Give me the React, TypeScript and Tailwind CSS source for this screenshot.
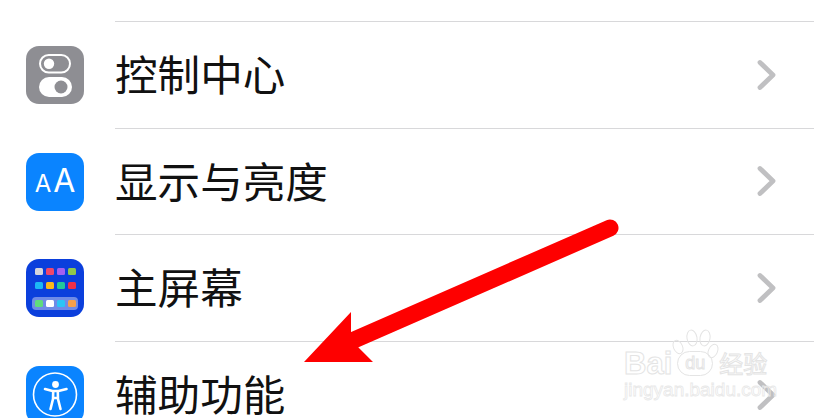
import type { ReactNode } from 'react';

function ControlIcon() {
  return (
    <svg viewBox="0 0 58 58" className="w-[58px] h-[58px]">
      <rect width="58" height="58" rx="13" fill="#8e8e93" />
      <rect x="14" y="9" width="30" height="17.5" rx="8.75" fill="none" stroke="#fff" strokeWidth="2" />
      <circle cx="23" cy="17.75" r="5.2" fill="#fff" />
      <rect x="13" y="31" width="33" height="20" rx="10" fill="#fff" />
      <circle cx="35" cy="41" r="6.5" fill="#8e8e93" />
    </svg>
  );
}

function DisplayIcon() {
  return (
    <div className="w-[58px] h-[58px] rounded-[13px] bg-[#0a84ff] flex items-baseline justify-center gap-[2px] pt-[12px] text-white font-normal font-['Inter',sans-serif]">
      <span className="text-[24px] leading-none">A</span>
      <span className="text-[32px] leading-none">A</span>
    </div>
  );
}

const homeDots = ['#d5d5dc', '#f0476b', '#a55ff0', '#8fc84a', '#1cb8f5', '#fbb81c', '#22c79a', '#f0304a'];
const dockDots = ['#5fdc7c', '#ffffff', '#2cc4f5', '#f5a04a'];

function HomeIcon() {
  return (
    <div className="w-[58px] h-[58px] rounded-[13px] bg-[#0b3fdc] flex flex-col items-center pt-[9px]">
      <div className="grid grid-cols-4 gap-x-[3px] gap-y-[7px]">
        {homeDots.map((c) => (
          <div key={c} className="w-[8px] h-[7px] rounded-[1.5px]" style={{ backgroundColor: c }} />
        ))}
      </div>
      <div className="mt-[8px] w-[46px] h-[13px] rounded-[4px] bg-[#6f8be6] flex items-center justify-center gap-[3px]">
        {dockDots.map((c) => (
          <div key={c} className="w-[8px] h-[7px] rounded-[1.5px]" style={{ backgroundColor: c }} />
        ))}
      </div>
    </div>
  );
}

function AccessIcon() {
  return (
    <svg viewBox="0 0 58 58" className="w-[58px] h-[58px]">
      <rect width="58" height="58" rx="13" fill="#0a84ff" />
      <circle cx="29" cy="28.5" r="21.5" fill="none" stroke="#fff" strokeWidth="1.6" />
      <circle cx="29.5" cy="18.5" r="3.4" fill="#fff" />
      <path d="M19 23 L26.5 25 H32.5 L40.5 23 M27.2 26 L27 33 L24.5 43 M31.8 26 L32 33 L34.5 43 M27 32 H32" fill="none" stroke="#fff" strokeWidth="2.6" strokeLinecap="round" strokeLinejoin="round" />
    </svg>
  );
}

function Row({ icon, label }: { icon: ReactNode; label: string }) {
  return (
    <div className="h-[106.6px] shrink-0 flex items-center pl-[26px]">
      <div className="shrink-0 mt-[1.5px]">{icon}</div>
      <div className="ml-[31px] flex-1 h-full flex items-center border-t border-[#d8d8da] pr-[37px] self-stretch">
        <span className="flex-1 -mt-[3px] text-[42.6px] leading-none text-[#111] font-['Noto_Sans_CJK_SC',sans-serif]">{label}</span>
        <svg viewBox="0 0 20 32" className="w-[20px] h-[32px]">
          <path d="M3 3.5 L16 16 L3 28.5" fill="none" stroke="#c0c0c2" strokeWidth="4.8" strokeLinecap="round" strokeLinejoin="round" />
        </svg>
      </div>
    </div>
  );
}

export default function App() {
  return (
    <div className="relative w-[814px] h-[418px] overflow-hidden bg-white">
      <div className="pt-[21px] flex flex-col">
        <Row icon={<ControlIcon />} label="控制中心" />
        <Row icon={<DisplayIcon />} label="显示与亮度" />
        <Row icon={<HomeIcon />} label="主屏幕" />
        <Row icon={<AccessIcon />} label="辅助功能" />
      </div>

      {/* red arrow */}
      <svg viewBox="0 0 814 418" className="absolute inset-0 w-[814px] h-[418px]">
        <path d="M354 340 L610 228" stroke="#fe0000" strokeWidth="17" strokeLinecap="round" fill="none" />
        <polygon points="304,362 351,312 351,333 358,347 373,362" fill="#fe0000" />
      </svg>

      {/* watermark */}
      <div className="absolute left-[624px] top-[349px] font-['Liberation_Sans',sans-serif] leading-none">
        <div className="flex items-center h-[28px]">
          <span className="text-[31px] leading-none font-bold text-transparent [-webkit-text-stroke:1px_#e4e4e4]">Bai</span>
          <span className="ml-[5px] w-[36px] h-[25px] rounded-full border border-[#e4e4e4] flex items-center justify-center text-[18px] text-transparent [-webkit-text-stroke:1px_#e4e4e4]">du</span>
          <span className="ml-[6px] text-[24px] leading-none text-transparent [-webkit-text-stroke:1px_#e4e4e4] font-['Noto_Sans_CJK_SC',sans-serif]">经验</span>
        </div>
        <div className="mt-[3px] text-[19px] text-transparent [-webkit-text-stroke:0.8px_#e8e8e8]">jingyan.baidu.com</div>
      </div>
      <svg viewBox="0 0 50 30" className="absolute left-[671px] top-[329px] w-[50px] h-[30px]">
        <g fill="none" stroke="#e4e4e4" strokeWidth="1">
          <ellipse cx="7" cy="18" rx="4.5" ry="7" transform="rotate(-25 7 18)" />
          <ellipse cx="21" cy="9" rx="5" ry="8" transform="rotate(-10 21 9)" />
          <ellipse cx="34" cy="9" rx="5" ry="8" transform="rotate(10 34 9)" />
          <ellipse cx="42" cy="22" rx="4.5" ry="7" transform="rotate(25 42 22)" />
        </g>
      </svg>
    </div>
  );
}
